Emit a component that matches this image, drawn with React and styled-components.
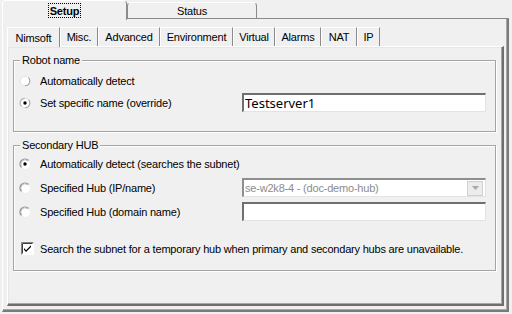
import React from "react";
import styled, { createGlobalStyle } from "styled-components";

const Global = createGlobalStyle`
  html, body { margin: 0; padding: 0; background: #f0f0f0; }
  body {
    font-family: "Liberation Sans", Arial, sans-serif;
    font-size: 11px;
    letter-spacing: -0.2px;
    color: #000;
  }
`;

const Window = styled.div`
  width: 512px;
  height: 314px;
  box-sizing: border-box;
  padding-left: 2px;
  background: #f0f0f0;
  overflow: hidden;
`;

const TopTabs = styled.div`
  display: flex;
  align-items: flex-end;
  height: 19px;
`;

const TopTab = styled.div`
  box-sizing: border-box;
  flex-shrink: 0;
  width: ${(p) => p.width}px;
  height: ${(p) => (p.active ? 20 : 17)}px;
  margin-bottom: ${(p) => (p.active ? -1 : 0)}px;
  position: relative;
  z-index: ${(p) => (p.active ? 2 : 1)};
  display: flex;
  align-items: center;
  justify-content: center;
  background: #f0f0f0;
  border: 1px solid #8a8a8a;
  border-top-color: #ffffff;
  border-left-color: ${(p) => (p.active ? "#ffffff" : "#8a8a8a")};
  border-bottom: ${(p) => (p.active ? "none" : "1px solid #8a8a8a")};
  border-radius: 4px 4px 0 0;
  font-weight: ${(p) => (p.active ? "bold" : "normal")};
  padding-top: ${(p) => (p.active ? 0 : 1)}px;
`;

const Focus = styled.span`
  outline: 1px dotted #000;
  padding: 1px 1px 0 1px;
  line-height: 12px;
`;

const TopFill = styled.div`
  flex: 1;
  height: 1px;
  background: #8a8a8a;
  margin-right: 3px;
`;

const OuterPanel = styled.div`
  box-sizing: border-box;
  width: 507px;
  height: 293px;
  padding: 8px 3px 4px 4px;
  border-left: 1px solid #ffffff;
  border-right: 2px solid #7a7a7a;
  border-bottom: 2px solid #7a7a7a;
  box-shadow: inset -1px -1px 0 #a8a8a8;
  display: flex;
  flex-direction: column;
`;

const InnerTabs = styled.div`
  display: flex;
  height: 19px;
  flex-shrink: 0;
`;

const InnerTab = styled.div`
  box-sizing: border-box;
  flex-shrink: 0;
  width: ${(p) => p.width}px;
  height: ${(p) => (p.active ? 20 : 19)}px;
  display: flex;
  align-items: center;
  justify-content: center;
  background: #f0f0f0;
  border-left: 1px solid #ffffff;
  border-right: 1px solid #8a8a8a;
  border-top: 1px solid #ffffff;
  position: relative;
  z-index: ${(p) => (p.active ? 2 : 1)};
`;

const InnerPanel = styled.div`
  box-sizing: border-box;
  height: 260px;
  flex-shrink: 0;
  padding: 7px 6px 0 5px;
  border-top: 1px solid #ffffff;
  border-left: 1px solid #ffffff;
  border-right: 2px solid #6e6e6e;
  border-bottom: 2px solid #6e6e6e;
  box-shadow: inset -1px -1px 0 #a8a8a8, inset 1px 1px 0 #e6e6e6;
`;

const Group = styled.fieldset`
  margin: 0 0 ${(p) => p.gap || 0}px 0;
  padding: ${(p) => p.pad};
  min-inline-size: 0;
  border: 1px solid #a5a5a5;
  box-shadow: inset 1px 1px 0 #ffffff, 1px 1px 0 #ffffff;
  display: flex;
  flex-direction: column;
`;

const Legend = styled.legend`
  padding: 0 2px;
  margin-left: 6px;
  line-height: 12px;
  background: #f0f0f0;
`;

const Row = styled.div`
  display: flex;
  align-items: center;
  height: ${(p) => p.h || 19}px;
  margin-top: ${(p) => p.mt || 0}px;
  padding-left: 5px;
`;

const Label = styled.label`
  display: flex;
  align-items: center;
  gap: 9px;
  width: 223px;
  flex-shrink: 0;
  white-space: nowrap;
  svg { flex-shrink: 0; display: block; }
`;

const CheckLabel = styled.label`
  display: flex;
  align-items: center;
  gap: 6px;
  padding-left: 2px;
  white-space: nowrap;
  svg { flex-shrink: 0; display: block; }
`;

const TextBox = styled.div`
  box-sizing: border-box;
  width: 244px;
  height: 19px;
  background: #ffffff;
  border-top: 2px solid #6f6f6f;
  border-left: 2px solid #6f6f6f;
  border-right: 1px solid #e3e3e3;
  border-bottom: 1px solid #e3e3e3;
  padding-left: 1px;
  display: flex;
  align-items: center;
  font-family: "Noto Sans", "Open Sans", sans-serif;
  font-size: 13px;
  letter-spacing: 0;
`;

const Combo = styled(TextBox)`
  border-top-color: #8e8e8e;
  border-left-color: #8e8e8e;
  color: #8c8c8c;
  font-family: "Liberation Sans", Arial, sans-serif;
  font-size: 11px;
  letter-spacing: -0.2px;
  justify-content: space-between;
  padding-right: 2px;
`;

const ArrowBtn = styled.div`
  width: 14px;
  height: 13px;
  background: #ececec;
  border: 1px solid #d0d0d0;
  display: flex;
  align-items: center;
  justify-content: center;
`;

// classic radio: dark arc top-left, light arc bottom-right
function Radio({ checked, faint }) {
  if (faint) {
    return (
      <svg width="12" height="12" viewBox="0 0 12 12">
        <circle cx="6" cy="6" r="4.8" fill="#ffffff" stroke="#e2e2e2" strokeWidth="1" />
        <path d="M9.4 2.6 A4.8 4.8 0 0 1 6 10.8" fill="none" stroke="#a8a8a8" strokeWidth="1.1" />
        {checked && (
          <>
            <path d="M6 1.2 A4.8 4.8 0 0 0 2.6 9.4" fill="none" stroke="#b4b4b4" strokeWidth="1.1" />
            <circle cx="6" cy="6" r="1.7" fill="#000" />
          </>
        )}
      </svg>
    );
  }
  return (
    <svg width="12" height="12" viewBox="0 0 12 12">
      <circle cx="6" cy="6" r="5" fill="#ffffff" />
      <path d="M2.46 9.54 A5 5 0 0 1 9.54 2.46" fill="none" stroke="#8c8c8c" strokeWidth="1.2" />
      <path d="M3.17 8.83 A4 4 0 0 1 8.83 3.17" fill="none" stroke="#c4c4c4" strokeWidth="0.9" />
      {checked && <circle cx="6" cy="6" r="1.7" fill="#000" />}
    </svg>
  );
}

function CheckBox() {
  return (
    <svg width="13" height="13" viewBox="0 0 13 13">
      <rect x="0" y="0" width="13" height="13" fill="#ffffff" />
      <path d="M0.5 12.5 V0.5 H12.5" fill="none" stroke="#808080" />
      <path d="M1.5 11.5 V1.5 H11.5" fill="none" stroke="#404040" />
      <path d="M3 6 L5 8.2 L10 3.2 V5 L5 10 L3 7.8 Z" fill="#000" />
    </svg>
  );
}

const innerTabs = [
  { name: "Nimsoft", width: 53, active: true },
  { name: "Misc.", width: 38 },
  { name: "Advanced", width: 62 },
  { name: "Environment", width: 73 },
  { name: "Virtual", width: 42 },
  { name: "Alarms", width: 46 },
  { name: "NAT", width: 36 },
  { name: "IP", width: 23 },
];

export default function App() {
  return (
    <Window>
      <Global />
      <TopTabs>
        <TopTab active width={125}>
          <Focus>Setup</Focus>
        </TopTab>
        <TopTab width={130}>Status</TopTab>
        <TopFill />
      </TopTabs>
      <OuterPanel>
        <InnerTabs>
          {innerTabs.map((t) => (
            <InnerTab key={t.name} active={t.active} width={t.width}>
              {t.name}
            </InnerTab>
          ))}
        </InnerTabs>
        <InnerPanel>
          <Group pad="7px 0 19px 0" gap={7}>
            <Legend>Robot name</Legend>
            <Row h={16}>
              <Label>
                <Radio faint />
                Automatically detect
              </Label>
            </Row>
            <Row mt={4}>
              <Label>
                <Radio checked faint />
                Set specific name (override)
              </Label>
              <TextBox>Testserver1</TextBox>
            </Row>
          </Group>
          <Group pad="3px 0 12px 0">
            <Legend>Secondary HUB</Legend>
            <Row>
              <Label>
                <Radio checked />
                Automatically detect (searches the subnet)
              </Label>
            </Row>
            <Row mt={5}>
              <Label>
                <Radio />
                Specified Hub (IP/name)
              </Label>
              <Combo>
                se-w2k8-4 - (doc-demo-hub)
                <ArrowBtn>
                  <svg width="7" height="4" viewBox="0 0 7 4">
                    <path d="M0 0 H7 L3.5 4 Z" fill="#a8a8a8" />
                  </svg>
                </ArrowBtn>
              </Combo>
            </Row>
            <Row mt={5}>
              <Label>
                <Radio />
                Specified Hub (domain name)
              </Label>
              <TextBox />
            </Row>
            <Row mt={18}>
              <CheckLabel>
                <CheckBox />
                Search the subnet for a temporary hub when primary and secondary hubs are unavailable.
              </CheckLabel>
            </Row>
          </Group>
        </InnerPanel>
      </OuterPanel>
    </Window>
  );
}
